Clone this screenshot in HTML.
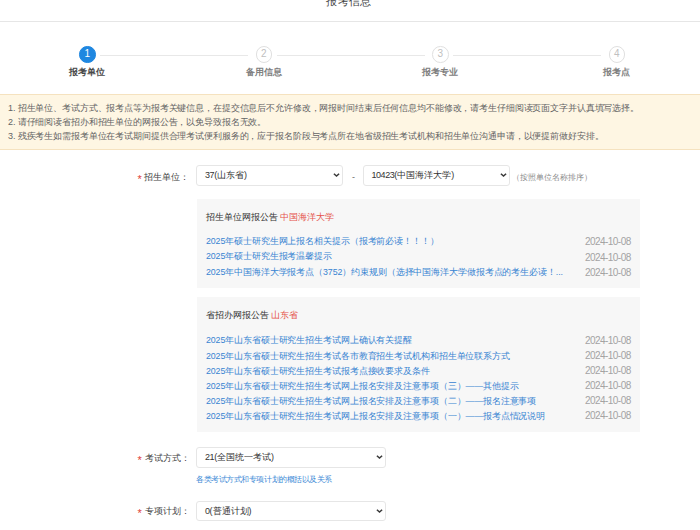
<!DOCTYPE html>
<html><head><meta charset="utf-8">
<style>
*{margin:0;padding:0;box-sizing:border-box}
html,body{width:700px;height:530px;overflow:hidden;background:#fff}
body{font-family:"Liberation Sans",sans-serif;color:#333;position:relative;text-spacing-trim:space-all}
.abs{position:absolute;white-space:nowrap}
.title{left:-1px;width:700px;top:-6px;text-align:center;font-size:11px;letter-spacing:0.45px;color:#444;line-height:14px}
.hline{position:absolute;left:0;top:21px;width:700px;height:1px;background:#e6e6e6}
.step{position:absolute;top:46.4px;width:16.5px;height:16.5px;border-radius:50%;border:1px solid #e0e0e0;color:#c0c0c0;font-size:10px;line-height:14.5px;text-align:center;background:#fff}
.step.on{background:#1f87e0;border-color:#1f87e0;color:#fff}
.sline{position:absolute;top:55px;height:1px;background:#e8e8e8}
.slabel{position:absolute;top:66.5px;width:80px;text-align:center;font-size:9px;line-height:11px;color:#808080;font-weight:bold}
.slabel.on{color:#484848}
.notice{position:absolute;left:0;top:94px;width:700px;height:56px;background:#fef6e3;border-top:1px solid #f5e2bf;border-bottom:1px solid #f5e2bf}
.notice p{position:absolute;left:8px;font-size:9px;letter-spacing:-0.125px;line-height:10px;color:#636363;white-space:nowrap}
.lab{font-size:9px;line-height:12px;color:#444}
.star{color:#e0403a;font-size:11px;line-height:12px}
.sel{position:absolute;height:20.5px;border:1px solid #e6e6e6;border-radius:3px;background:#fff;font-size:9px;line-height:18px;padding-left:8px;color:#333}
.chev{position:absolute;right:2px;top:7.2px;width:7px;height:5px}
.panel{position:absolute;left:197px;width:442.5px;background:#f7f7f7}
.ptitle{position:absolute;left:9px;font-size:8.8px;line-height:11px;color:#333;margin-top:0.7px}
.ptitle span{color:#e5534b}
.lk{position:absolute;left:9px;font-size:8.8px;letter-spacing:-0.1px;line-height:11px;color:#3784d2;white-space:nowrap}
.dt{position:absolute;left:388px;font-size:10px;letter-spacing:-0.55px;line-height:11px;color:#a3a3a3;margin-top:1px}
.n{font-weight:normal;letter-spacing:-0.45px}
.yr{display:inline-block;font-size:10px;width:19.6px;transform:scaleX(0.885);transform-origin:0 50%;letter-spacing:0}
.hint{font-size:8px;color:#888;text-spacing-trim:space-all}
.blue{color:#3d8ad6}
</style></head><body>
<div class="abs title">报考信息</div>
<div class="hline"></div>

<div class="sline" style="left:100px;width:148px"></div>
<div class="sline" style="left:277px;width:148px"></div>
<div class="sline" style="left:453px;width:148px"></div>
<div class="step on" style="left:79px">1</div>
<div class="step" style="left:255.5px">2</div>
<div class="step" style="left:432px">3</div>
<div class="step" style="left:608.5px">4</div>
<div class="slabel on" style="left:47px">报考单位</div>
<div class="slabel" style="left:223.5px">备用信息</div>
<div class="slabel" style="left:400px">报考专业</div>
<div class="slabel" style="left:576.5px">报考点</div>

<div class="notice">
<p style="top:8px">1. 招生单位、考试方式、报考点等为报考关键信息，在提交信息后不允许修改，网报时间结束后任何信息均不能修改，请考生仔细阅读页面文字并认真填写选择。</p>
<p style="top:22px">2. 请仔细阅读省招办和招生单位的网报公告，以免导致报名无效。</p>
<p style="top:36px">3. 残疾考生如需报考单位在考试期间提供合理考试便利服务的，应于报名阶段与考点所在地省级招生考试机构和招生单位沟通申请，以便提前做好安排。</p>
</div>

<div class="abs star" style="left:137.5px;top:172.5px">*</div><div class="abs lab" style="left:144px;top:170.5px">招生单位：</div>
<div class="sel" style="left:196px;top:165px;width:147px"><b class="n">37</b>(山东省)<svg class="chev" viewBox="0 0 7 5"><polyline points="0.9,0.8 3.5,3.1 6.1,0.8" fill="none" stroke="#3a3a3a" stroke-width="1.5"/></svg></div>
<div class="abs" style="left:352px;top:170.5px;font-size:9px;color:#666;line-height:12px">-</div>
<div class="sel" style="left:362.5px;top:165px;width:147.5px"><b class="n">10423</b>(中国海洋大学)<svg class="chev" viewBox="0 0 7 5"><polyline points="0.9,0.8 3.5,3.1 6.1,0.8" fill="none" stroke="#3a3a3a" stroke-width="1.5"/></svg></div>
<div class="abs hint" style="left:512px;top:172.5px;line-height:10px">（按照单位名称排序）</div>

<div class="panel" style="top:199px;height:89px">
<div class="ptitle" style="top:12px">招生单位网报公告 <span>中国海洋大学</span></div>
<div class="lk" style="margin-top:0.6px;top:36px">2025年硕士研究生网上报名相关提示（报考前必读！！！）</div>
<div class="dt" style="top:36px">2024-10-08</div>
<div class="lk" style="margin-top:0.6px;top:51.5px">2025年硕士研究生报考温馨提示</div>
<div class="dt" style="top:51.5px">2024-10-08</div>
<div class="lk" style="margin-top:0.6px;top:67px">2025年中国海洋大学报考点（3752）约束规则（选择中国海洋大学做报考点的考生必读！...</div>
<div class="dt" style="top:67px">2024-10-08</div>
</div>

<div class="panel" style="top:297px;height:135px">
<div class="ptitle" style="top:12px">省招办网报公告 <span>山东省</span></div>
<div class="lk" style="margin-top:0.6px;top:37.6px">2025年山东省硕士研究生招生考试网上确认有关提醒</div>
<div class="dt" style="top:36.5px">2024-10-08</div>
<div class="lk" style="margin-top:0.6px;top:53px">2025年山东省硕士研究生招生考试各市教育招生考试机构和招生单位联系方式</div>
<div class="dt" style="top:51.8px">2024-10-08</div>
<div class="lk" style="margin-top:0.6px;top:68.3px">2025年山东省硕士研究生招生考试报考点接收要求及条件</div>
<div class="dt" style="top:67px">2024-10-08</div>
<div class="lk" style="margin-top:0.6px;top:83.4px">2025年山东省硕士研究生招生考试网上报名安排及注意事项（三）——其他提示</div>
<div class="dt" style="top:82.4px">2024-10-08</div>
<div class="lk" style="margin-top:0.6px;top:98.5px">2025年山东省硕士研究生招生考试网上报名安排及注意事项（二）——报名注意事项</div>
<div class="dt" style="top:97.3px">2024-10-08</div>
<div class="lk" style="margin-top:0.6px;top:113.6px">2025年山东省硕士研究生招生考试网上报名安排及注意事项（一）——报考点情况说明</div>
<div class="dt" style="top:112.1px">2024-10-08</div>
</div>

<div class="abs star" style="left:137.5px;top:454px">*</div><div class="abs lab" style="left:144.5px;top:451.5px">考试方式：</div>
<div class="sel" style="left:196px;top:447px;width:190px"><b class="n">21</b>(全国统一考试)<svg class="chev" viewBox="0 0 7 5"><polyline points="0.9,0.8 3.5,3.1 6.1,0.8" fill="none" stroke="#3a3a3a" stroke-width="1.5"/></svg></div>
<div class="abs hint blue" style="left:196px;top:474.5px;line-height:10px;letter-spacing:-0.45px">各类考试方式和专项计划的概括以及关系</div>

<div class="abs star" style="left:137.5px;top:507px">*</div><div class="abs lab" style="left:144.5px;top:504.5px">专项计划：</div>
<div class="sel" style="left:196px;top:500.5px;width:190px"><b class="n">0</b>(普通计划)<svg class="chev" viewBox="0 0 7 5"><polyline points="0.9,0.8 3.5,3.1 6.1,0.8" fill="none" stroke="#3a3a3a" stroke-width="1.5"/></svg></div>
</body></html>
